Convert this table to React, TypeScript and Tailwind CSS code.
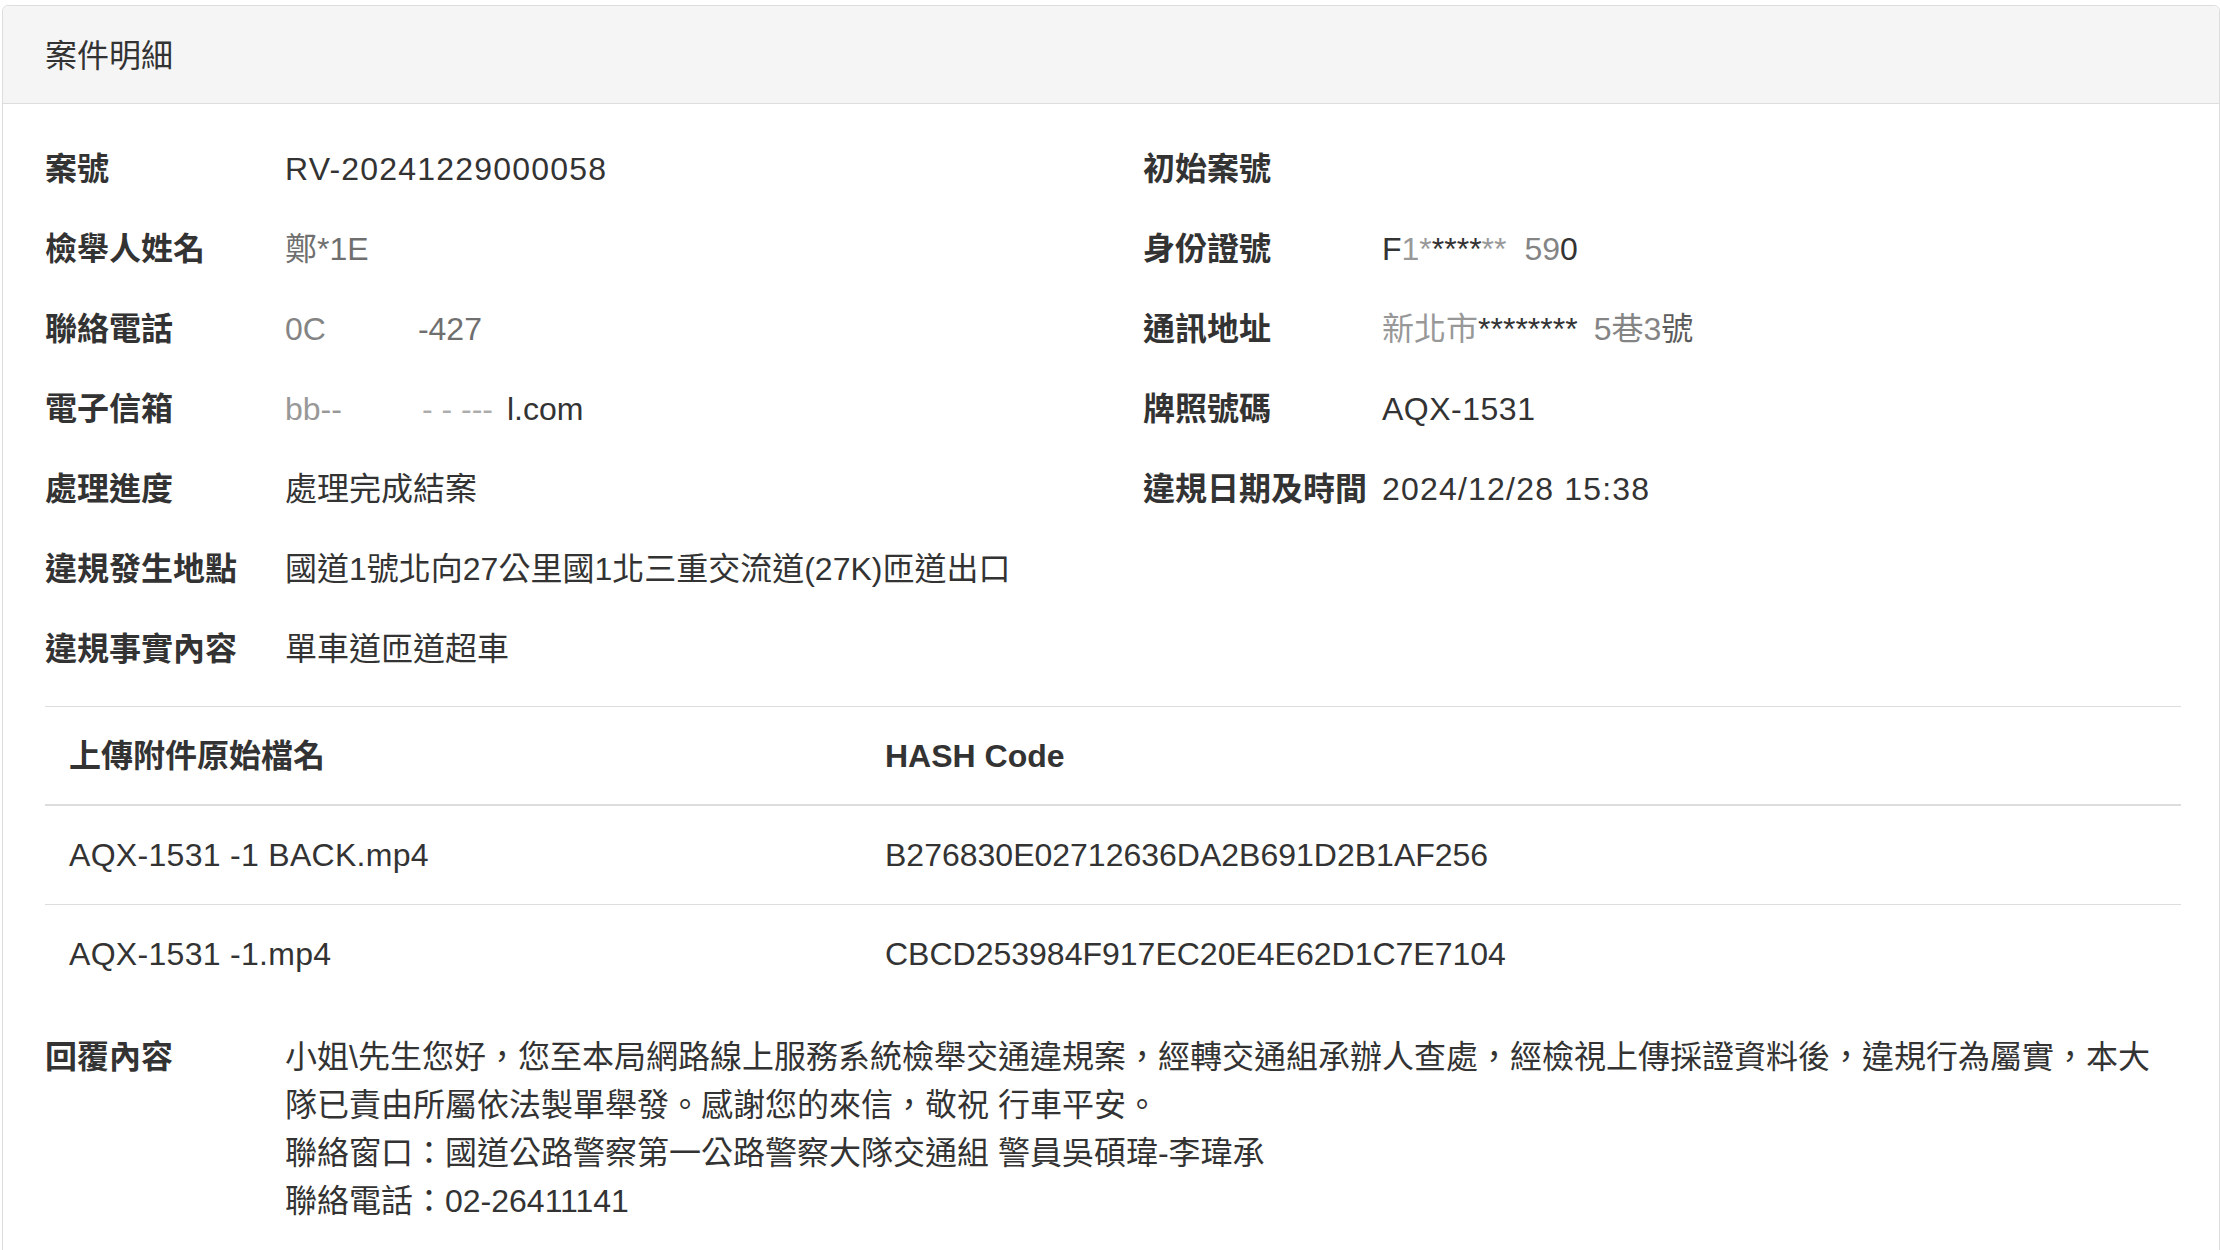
const rows: [string, React.ReactNode, string, React.ReactNode][] = [
  ["案號", <span className="tracking-[1.2px]">RV-20241229000058</span>, "初始案號", ""],
  [
    "檢舉人姓名",
    <span className="opacity-70">鄭*1E</span>,
    "身份證號",
    <span>
      <span>F</span>
      <span className="opacity-50">1*</span>
      <span>****</span>
      <span className="opacity-50">**</span>
      <span className="ml-[18px] opacity-60">59</span>
      <span>0</span>
    </span>,
  ],
  [
    "聯絡電話",
    <span>
      <span className="opacity-60">0C</span>
      <span className="ml-[92px] opacity-70">-427</span>
    </span>,
    "通訊地址",
    <span>
      <span className="opacity-50">新北市</span>
      <span>********</span>
      <span className="ml-[16px] opacity-60">5巷3</span>
      <span className="opacity-80">號</span>
    </span>,
  ],
  [
    "電子信箱",
    <span>
      <span className="opacity-50">bb--</span>
      <span className="ml-[80px] opacity-40">- - ---</span>
      <span className="ml-[14px]">l.com</span>
    </span>,
    "牌照號碼",
    <span className="tracking-[0.5px]">AQX-1531</span>,
  ],
  [
    "處理進度",
    "處理完成結案",
    "違規日期及時間",
    <span className="tracking-[1.2px]">2024/12/28 15:38</span>,
  ],
  ["違規發生地點", "國道1號北向27公里國1北三重交流道(27K)匝道出口", "", ""],
  ["違規事實內容", "單車道匝道超車", "", ""],
];

const files = [
  ["AQX-1531 -1 BACK.mp4", "B276830E02712636DA2B691D2B1AF256"],
  ["AQX-1531 -1.mp4", "CBCD253984F917EC20E4E62D1C7E7104"],
];

export default function App() {
  return (
    <div
      className="min-h-[1250px] bg-white pt-[5px] pl-[2px] text-[32px] text-[#333]"
      style={{ fontFamily: '"Liberation Sans", "Noto Sans CJK TC", sans-serif' }}
    >
      <div className="w-[2218px] rounded-t-[6px] border border-[#ddd] pb-[60px]">
        <div className="flex h-[98px] items-center rounded-t-[6px] border-b border-[#ddd] bg-[#f5f5f5] px-[42px] pt-[3px]">
          案件明細
        </div>

        <div className="pl-[42px] pr-[38px] pt-[25px]">
          {rows.map(([l1, v1, l2, v2], i) => (
            <div key={i} className="grid h-[80px] grid-cols-[1098px_1fr] items-center">
              <div className="flex items-center">
                <div className="w-[240px] font-bold">{l1}</div>
                <div>{v1}</div>
              </div>
              <div className="flex items-center">
                <div className="w-[239px] font-bold">{l2}</div>
                <div>{v2}</div>
              </div>
            </div>
          ))}

          <div className="mt-[17px] border-t border-[#ddd]">
            <div className="flex h-[99px] items-center border-b-2 border-[#ddd] font-bold">
              <div className="w-[816px] px-[24px]">上傳附件原始檔名</div>
              <div className="px-[24px]">HASH Code</div>
            </div>
            {files.map(([name, hash], i) => (
              <div
                key={name}
                className={`flex h-[98px] items-center ${i > 0 ? "border-t border-[#ddd]" : ""}`}
              >
                <div className="w-[816px] px-[24px] tracking-[0.3px]">{name}</div>
                <div className="px-[24px]">{hash}</div>
              </div>
            ))}
          </div>

          <div className="mt-[31px] flex leading-[48px]">
            <div className="w-[240px] shrink-0 font-bold">回覆內容</div>
            <div className="whitespace-nowrap">
              小姐\先生您好，您至本局網路線上服務系統檢舉交通違規案，經轉交通組承辦人查處，經檢視上傳採證資料後，違規行為屬實，本大
              <br />
              隊已責由所屬依法製單舉發。感謝您的來信，敬祝 行車平安。
              <br />
              聯絡窗口：國道公路警察第一公路警察大隊交通組 警員吳碩瑋-李瑋承
              <br />
              聯絡電話：02-26411141
            </div>
          </div>
        </div>
      </div>
    </div>
  );
}
